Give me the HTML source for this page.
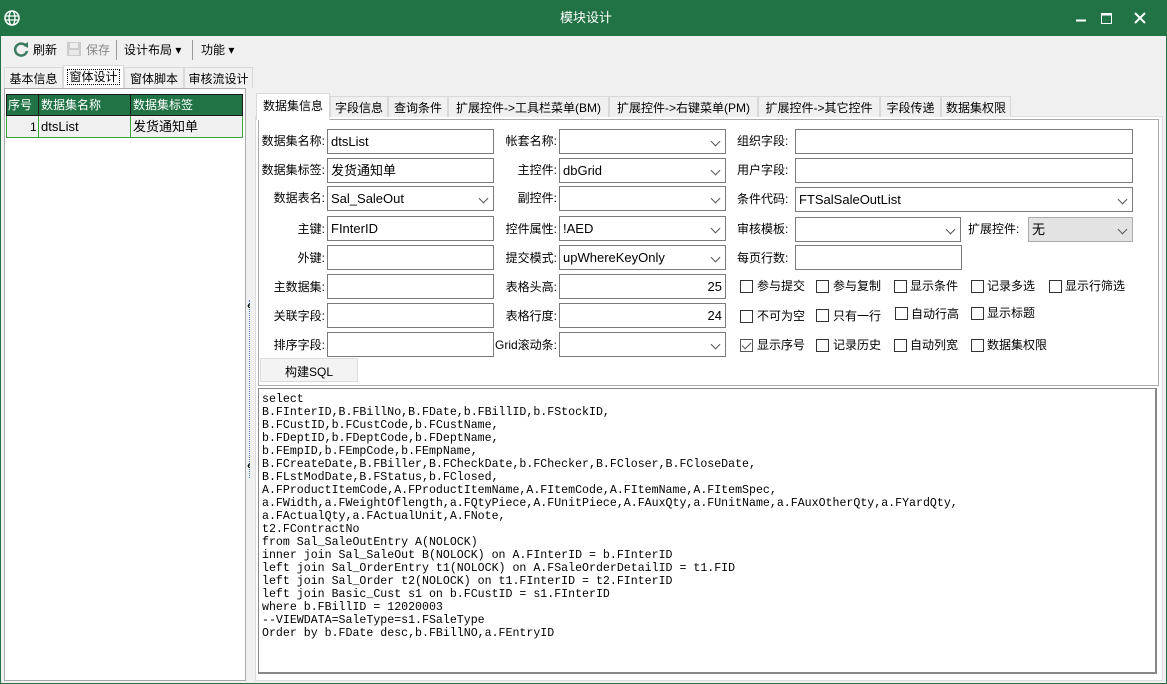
<!DOCTYPE html>
<html><head><meta charset="utf-8"><style>
*{box-sizing:border-box;margin:0;padding:0}
body{width:1167px;height:684px;overflow:hidden;background:#f0f0f0;font-family:"Liberation Sans","Noto Sans CJK SC",sans-serif;font-size:12px;color:#000;position:relative}
.a{position:absolute}
.t{position:absolute;white-space:nowrap;line-height:16px}
.in{position:absolute;background:#fff;border:1px solid #7a7a7a;height:25px;padding:4px 0 0 3px;font-size:13px;line-height:16px;white-space:nowrap}
.cb:after{content:"";position:absolute;right:6px;top:8px;width:6px;height:6px;border-right:1px solid #555;border-bottom:1px solid #555;transform:rotate(45deg)}
.lb{position:absolute;text-align:right;width:80px;font-size:12px;line-height:16px}
.ck{position:absolute;width:13px;height:13px;border:1px solid #333;background:#fff}
.ckl{position:absolute;font-size:12px;line-height:16px;white-space:nowrap}
.tab{position:absolute;height:21px;border:1px solid #d9d9d9;border-bottom:none;background:#f0f0f0;padding-top:2px;text-align:center;font-size:12px;white-space:nowrap}
pre{font-family:"Liberation Mono",monospace;font-size:11.6px;line-height:13px}
</style></head><body>
<div class="a" style="left:0;top:0;width:1167px;height:36px;background:#217346"></div>
<svg class="a" style="left:4px;top:10px" width="16" height="16" viewBox="0 0 16 16"><circle cx="8" cy="8" r="7" fill="none" stroke="#fff" stroke-width="1.5"/><ellipse cx="8" cy="8" rx="3" ry="7" fill="none" stroke="#fff" stroke-width="1.3"/><path d="M1 6H15M1 10H15" stroke="#fff" stroke-width="1.3"/></svg>
<div class="t" style="left:560px;top:10px;color:#fff;font-size:13px">模块设计</div>
<svg class="a" style="left:1070px;top:8px" width="90" height="20"><path d="M6 12.5H16" stroke="#fff" stroke-width="2"/><rect x="31.5" y="5.5" width="10" height="10" fill="none" stroke="#fff"/><path d="M31.5 6.5H41.5" stroke="#fff" stroke-width="2"/><path d="M65 5L75 15M75 5L65 15" stroke="#fff" stroke-width="2"/></svg>
<div class="a" style="left:0;top:36px;width:1px;height:648px;background:#217346"></div>
<div class="a" style="left:1166px;top:36px;width:1px;height:648px;background:#217346"></div>
<div class="a" style="left:0;top:683px;width:1167px;height:1px;background:#217346"></div>
<!-- toolbar -->
<svg class="a" style="left:13px;top:41px" width="16" height="16" viewBox="0 0 16 16"><path d="M13 5A6 6 0 1 0 14 10" fill="none" stroke="#3d7a60" stroke-width="2.5"/><path d="M10 4L15 1L15 7Z" fill="#3d7a60"/></svg>
<div class="t" style="left:33px;top:42px">刷新</div>
<svg class="a" style="left:66px;top:41px" width="16" height="16"><rect x="1" y="1" width="14" height="14" fill="#ccc"/><rect x="4" y="2" width="8" height="5" fill="#eee"/><rect x="3" y="9" width="10" height="5" fill="#e8e8e8"/></svg>
<div class="t" style="left:86px;top:42px;color:#888">保存</div>
<div class="a" style="left:116px;top:40px;width:1px;height:20px;background:#999"></div>
<div class="t" style="left:124px;top:42px">设计布局 ▾</div>
<div class="a" style="left:192px;top:40px;width:1px;height:20px;background:#999"></div>
<div class="t" style="left:201px;top:42px">功能 ▾</div>
<!-- main tabs -->
<div class="tab" style="left:4px;top:67px;width:59px">基本信息</div>
<div class="tab" style="left:63px;top:65px;width:61px;height:23px;background:#fff"><span style="border:1px dotted #000;padding:0 1px">窗体设计</span></div>
<div class="tab" style="left:124px;top:67px;width:60px">窗体脚本</div>
<div class="tab" style="left:184px;top:67px;width:69px">审核流设计</div>
<!-- left panel -->
<div class="a" style="left:4px;top:88px;width:242px;height:593px;background:#fff;border:1px solid #aaa"></div>
<div class="a" style="left:6px;top:94px;width:237px;height:22px;background:#217346;border:1px solid #1a1a1a"></div>
<div class="a" style="left:38px;top:94px;width:1px;height:22px;background:#1a1a1a"></div>
<div class="a" style="left:130px;top:94px;width:1px;height:22px;background:#1a1a1a"></div>
<div class="t" style="left:8px;top:97px;color:#fff">序号</div>
<div class="t" style="left:41px;top:97px;color:#fff">数据集名称</div>
<div class="t" style="left:133px;top:97px;color:#fff">数据集标签</div>
<div class="a" style="left:6px;top:116px;width:237px;height:22px;background:#f0f0f0;border:1px solid #3aa63a;border-top:none"></div>
<div class="a" style="left:38px;top:116px;width:1px;height:22px;background:#3aa63a"></div>
<div class="a" style="left:130px;top:116px;width:1px;height:22px;background:#3aa63a"></div>
<div class="t" style="left:30px;top:119px">1</div>
<div class="t" style="left:41px;top:119px;font-size:13px">dtsList</div>
<div class="t" style="left:133px;top:119px;font-size:13px">发货通知单</div>
<!-- splitter -->
<div class="a" style="left:249px;top:300px;width:1px;height:178px;border-left:1px dotted #4a7fc0"></div>
<div class="t" style="left:247px;top:298px;font-size:11px;font-weight:bold">‹</div>
<div class="t" style="left:247px;top:458px;font-size:11px;font-weight:bold">‹</div>
<!-- right area -->
<div class="a" style="left:255px;top:116px;width:908px;height:565px;background:#fff;border:1px solid #ddd"></div>
<div class="a" style="left:258px;top:119px;width:901px;height:267px;border:1px solid #aaa;background:#fff"></div>
<div class="tab" style="left:330px;top:96px;width:58px">字段信息</div>
<div class="tab" style="left:388px;top:96px;width:60px">查询条件</div>
<div class="tab" style="left:448px;top:96px;width:161px">扩展控件-&gt;工具栏菜单(BM)</div>
<div class="tab" style="left:609px;top:96px;width:149px">扩展控件-&gt;右键菜单(PM)</div>
<div class="tab" style="left:758px;top:96px;width:122px">扩展控件-&gt;其它控件</div>
<div class="tab" style="left:880px;top:96px;width:61px">字段传递</div>
<div class="tab" style="left:941px;top:96px;width:70px">数据集权限</div>
<div class="tab" style="left:256px;top:93px;width:74px;height:27px;background:#fff;padding-top:3px">数据集信息</div>
<!-- col1 -->
<div class="lb" style="left:245px;top:133px">数据集名称:</div><div class="in" style="left:327px;top:129px;width:167px">dtsList</div>
<div class="lb" style="left:245px;top:162px">数据集标签:</div><div class="in" style="left:327px;top:158px;width:167px">发货通知单</div>
<div class="lb" style="left:245px;top:190px">数据表名:</div><div class="in cb" style="left:327px;top:186px;width:167px">Sal_SaleOut</div>
<div class="lb" style="left:245px;top:221px">主键:</div><div class="in" style="left:327px;top:216px;width:167px">FInterID</div>
<div class="lb" style="left:245px;top:250px">外键:</div><div class="in" style="left:327px;top:245px;width:167px"></div>
<div class="lb" style="left:245px;top:279px">主数据集:</div><div class="in" style="left:327px;top:274px;width:167px"></div>
<div class="lb" style="left:245px;top:308px">关联字段:</div><div class="in" style="left:327px;top:303px;width:167px"></div>
<div class="lb" style="left:245px;top:337px">排序字段:</div><div class="in" style="left:327px;top:332px;width:167px"></div>
<!-- col2 -->
<div class="lb" style="left:477px;top:133px">帐套名称:</div><div class="in cb" style="left:559px;top:129px;width:167px"></div>
<div class="lb" style="left:477px;top:162px">主控件:</div><div class="in cb" style="left:559px;top:158px;width:167px">dbGrid</div>
<div class="lb" style="left:477px;top:190px">副控件:</div><div class="in cb" style="left:559px;top:186px;width:167px"></div>
<div class="lb" style="left:477px;top:221px">控件属性:</div><div class="in cb" style="left:559px;top:216px;width:167px">!AED</div>
<div class="lb" style="left:477px;top:250px">提交模式:</div><div class="in cb" style="left:559px;top:245px;width:167px">upWhereKeyOnly</div>
<div class="lb" style="left:477px;top:279px">表格头高:</div><div class="in" style="left:559px;top:274px;width:167px;text-align:right;padding-right:3px">25</div>
<div class="lb" style="left:477px;top:308px">表格行度:</div><div class="in" style="left:559px;top:303px;width:167px;text-align:right;padding-right:3px">24</div>
<div class="lb" style="left:477px;top:337px">Grid滚动条:</div><div class="in cb" style="left:559px;top:332px;width:167px"></div>
<!-- col3 -->
<div class="t" style="left:737px;top:133px">组织字段:</div><div class="in" style="left:795px;top:129px;width:338px"></div>
<div class="t" style="left:737px;top:162px">用户字段:</div><div class="in" style="left:795px;top:158px;width:338px"></div>
<div class="t" style="left:737px;top:191px">条件代码:</div><div class="in cb" style="left:795px;top:187px;width:338px">FTSalSaleOutList</div>
<div class="t" style="left:737px;top:221px">审核模板:</div><div class="in cb" style="left:795px;top:217px;width:166px"></div>
<div class="t" style="left:968px;top:221px">扩展控件:</div><div class="in cb" style="left:1028px;top:217px;width:105px;background:#e3e3e3;border-color:#aaa">无</div>
<div class="t" style="left:737px;top:250px">每页行数:</div><div class="in" style="left:795px;top:245px;width:167px"></div>
<!-- checkboxes -->
<div class="ck" style="left:740px;top:280px"></div><div class="ckl" style="left:757px;top:278px">参与提交</div>
<div class="ck" style="left:816px;top:280px"></div><div class="ckl" style="left:833px;top:278px">参与复制</div>
<div class="ck" style="left:894px;top:280px"></div><div class="ckl" style="left:910px;top:278px">显示条件</div>
<div class="ck" style="left:971px;top:280px"></div><div class="ckl" style="left:987px;top:278px">记录多选</div>
<div class="ck" style="left:1049px;top:280px"></div><div class="ckl" style="left:1065px;top:278px">显示行筛选</div>
<div class="ck" style="left:740px;top:310px"></div><div class="ckl" style="left:757px;top:308px">不可为空</div>
<div class="ck" style="left:816px;top:309px"></div><div class="ckl" style="left:833px;top:308px">只有一行</div>
<div class="ck" style="left:895px;top:307px"></div><div class="ckl" style="left:911px;top:306px">自动行高</div>
<div class="ck" style="left:971px;top:307px"></div><div class="ckl" style="left:987px;top:305px">显示标题</div>
<div class="ck" style="left:740px;top:339px;border-color:#555"><div class="a" style="left:3px;top:0;width:5px;height:9px;border-right:1.5px solid #555;border-bottom:1.5px solid #555;transform:rotate(45deg)"></div></div><div class="ckl" style="left:757px;top:337px">显示序号</div>
<div class="ck" style="left:816px;top:339px"></div><div class="ckl" style="left:833px;top:337px">记录历史</div>
<div class="ck" style="left:894px;top:339px"></div><div class="ckl" style="left:910px;top:337px">自动列宽</div>
<div class="ck" style="left:971px;top:339px"></div><div class="ckl" style="left:987px;top:337px">数据集权限</div>
<!-- button -->
<div class="a" style="left:260px;top:358px;width:98px;height:24px;border:1px solid #ddd;background:#f3f3f3;text-align:center;padding-top:4px;font-size:12px">构建SQL</div>
<!-- SQL -->
<div class="a" style="left:258px;top:388px;width:899px;height:286px;background:#fff;border:1px solid #888;border-right-width:2px;border-bottom-width:2px;padding:4px 0 0 3px">
<pre>select
B.FInterID,B.FBillNo,B.FDate,b.FBillID,b.FStockID,
B.FCustID,b.FCustCode,b.FCustName,
b.FDeptID,b.FDeptCode,b.FDeptName,
b.FEmpID,b.FEmpCode,b.FEmpName,
B.FCreateDate,B.FBiller,B.FCheckDate,b.FChecker,B.FCloser,B.FCloseDate,
B.FLstModDate,B.FStatus,b.FClosed,
A.FProductItemCode,A.FProductItemName,A.FItemCode,A.FItemName,A.FItemSpec,
a.FWidth,a.FWeightOflength,a.FQtyPiece,A.FUnitPiece,A.FAuxQty,a.FUnitName,a.FAuxOtherQty,a.FYardQty,
a.FActualQty,a.FActualUnit,A.FNote,
t2.FContractNo
from Sal_SaleOutEntry A(NOLOCK)
inner join Sal_SaleOut B(NOLOCK) on A.FInterID = b.FInterID
left join Sal_OrderEntry t1(NOLOCK) on A.FSaleOrderDetailID = t1.FID
left join Sal_Order t2(NOLOCK) on t1.FInterID = t2.FInterID
left join Basic_Cust s1 on b.FCustID = s1.FInterID
where b.FBillID = 12020003
--VIEWDATA=SaleType=s1.FSaleType
Order by b.FDate desc,b.FBillNO,a.FEntryID</pre>
</div>
</body></html>
